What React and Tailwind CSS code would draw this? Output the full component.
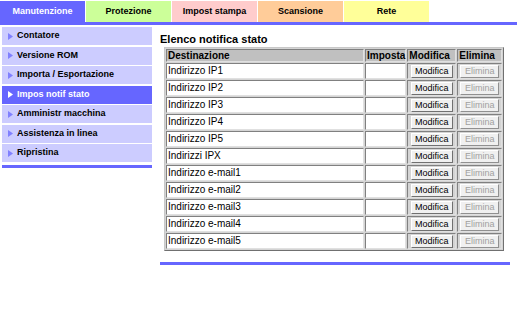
import React from 'react';

const tabs = [
  { label: 'Manutenzione', cls: 'bg-[#6666ff] text-white' },
  { label: 'Protezione', cls: 'bg-[#ccff99] text-black' },
  { label: 'Impost stampa', cls: 'bg-[#ffcccc] text-black' },
  { label: 'Scansione', cls: 'bg-[#ffcc99] text-black' },
  { label: 'Rete', cls: 'bg-[#ffff99] text-black' },
];

const menu = [
  'Contatore',
  'Versione ROM',
  'Importa / Esportazione',
  'Impos notif stato',
  'Amministr macchina',
  'Assistenza in linea',
  'Ripristina',
];

const rows = [
  'Indirizzo IP1',
  'Indirizzo IP2',
  'Indirizzo IP3',
  'Indirizzo IP4',
  'Indirizzo IP5',
  'Indirizzi IPX',
  'Indirizzo e-mail1',
  'Indirizzo e-mail2',
  'Indirizzo e-mail3',
  'Indirizzo e-mail4',
  'Indirizzo e-mail5',
];

function Arrow({ selected }) {
  return (
    <svg width="5" height="7" viewBox="0 0 5 7" className="shrink-0">
      <polygon points="0,0 5,3.5 0,7" fill={selected ? '#ffffff' : '#8080ff'} />
    </svg>
  );
}

const cellBorder = 'border border-t-[#808080] border-l-[#808080] border-r-[#e0e0e0] border-b-[#e0e0e0]';

export default function App() {
  return (
    <div className="w-[517px] h-[312px] bg-white font-['Liberation_Sans',Arial,sans-serif] text-black overflow-hidden">
      {/* barra delle schede */}
      <div className="flex h-[22px] pt-px">
        {tabs.map((t, i) => (
          <div
            key={t.label}
            className={`w-[85px] flex items-center justify-center text-[9px] font-bold ${t.cls} ${i > 0 ? 'ml-px' : ''}`}
          >
            {t.label}
          </div>
        ))}
      </div>
      <div className="h-[3px] bg-[#6666ff]" />

      <div className="flex">
        {/* menu laterale */}
        <div className="w-[152px] pl-[2px] pt-[2px]">
          <div className="flex flex-col gap-[1.5px]">
            {menu.map((m) => {
              const sel = m === 'Impos notif stato';
              return (
                <div
                  key={m}
                  className={`h-[18px] flex items-center gap-[4px] pl-[6px] text-[9px] font-bold ${
                    sel ? 'bg-[#6666ff] text-white' : 'bg-[#ccccff] text-black'
                  }`}
                >
                  <Arrow selected={sel} />
                  <span>{m}</span>
                </div>
              );
            })}
          </div>
          <div className="h-[3px] bg-[#6666ff] mt-[3px]" />
        </div>

        {/* contenuto */}
        <div className="ml-[8px] w-[350px]">
          <div className="mt-[7px] text-[11px] font-bold leading-[14px]">Elenco notifica stato</div>
          <table className="ml-[4px] mt-px table-fixed border-separate border-spacing-[1px] border border-t-[#c8c8c8] border-l-[#c8c8c8] border-r-[#707070] border-b-[#707070] bg-[#d4d4d4] text-[10px]">
            <colgroup>
              <col className="w-[198px]" />
              <col className="w-[39px]" />
              <col className="w-[49px]" />
              <col className="w-[45px]" />
            </colgroup>
            <thead>
              <tr>
                {['Destinazione', 'Imposta', 'Modifica', 'Elimina'].map((h) => (
                  <th key={h} className={`p-0 text-left font-bold bg-[#c0c0c0] ${cellBorder}`}>
                    <div className="h-[11px] leading-[11px] pl-px">{h}</div>
                  </th>
                ))}
              </tr>
            </thead>
            <tbody>
              {rows.map((r) => (
                <tr key={r}>
                  <td className={`p-0 bg-white ${cellBorder}`}>
                    <div className="h-[14px] leading-[14px] pl-px">{r}</div>
                  </td>
                  <td className={`p-0 bg-white ${cellBorder}`}>
                    <div className="h-[14px]" />
                  </td>
                  <td className={`p-0 bg-[#d4d4d4] ${cellBorder}`}>
                    <div className="h-[14px] flex items-center justify-center">
                      <button className="h-[13px] w-[42px] bg-[#f0f0f0] border border-t-[#ffffff] border-l-[#ffffff] border-r-[#707070] border-b-[#707070] text-[9px] leading-[11px] text-black">
                        Modifica
                      </button>
                    </div>
                  </td>
                  <td className={`p-0 bg-[#d4d4d4] ${cellBorder}`}>
                    <div className="h-[14px] flex items-center justify-center">
                      <button disabled className="h-[13px] w-[39px] bg-[#f0f0f0] border border-t-[#ffffff] border-l-[#ffffff] border-r-[#909090] border-b-[#909090] text-[9px] leading-[11px] text-[#a0a0a0]">
                        Elimina
                      </button>
                    </div>
                  </td>
                </tr>
              ))}
            </tbody>
          </table>
          <div className="h-[3px] bg-[#6666ff] mt-[11px]" />
        </div>
      </div>
    </div>
  );
}
